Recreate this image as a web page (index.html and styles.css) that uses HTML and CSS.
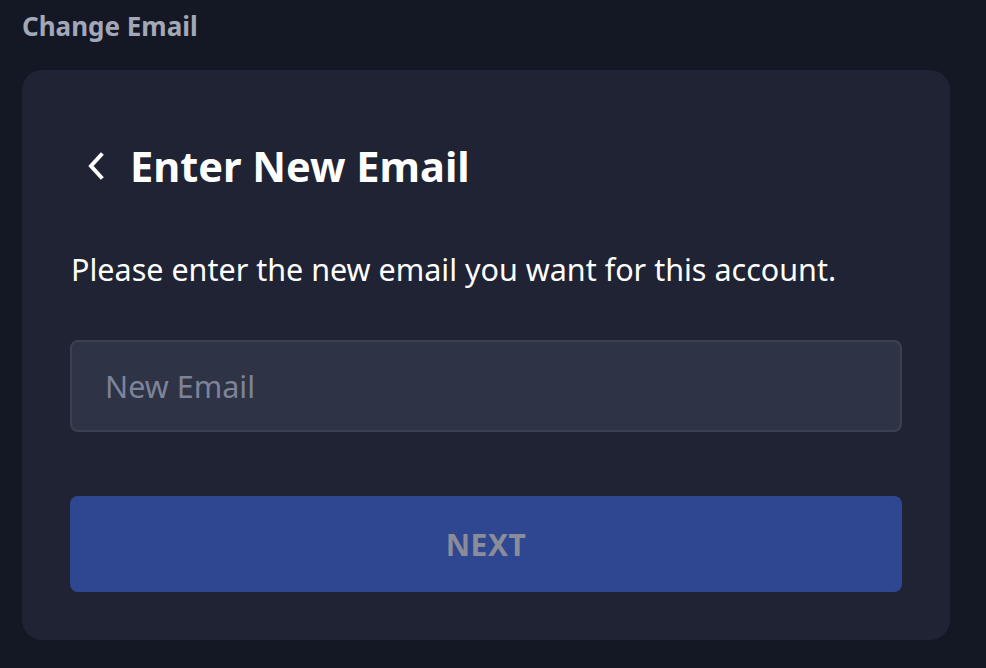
FILE: index.html
```html
<!DOCTYPE html>
<html lang="en">
<head>
    <meta charset="UTF-8">
    <meta name="viewport" content="width=device-width, initial-scale=1.0">
    <title>Change Email</title>
    <link rel="stylesheet" href="styles.css">
</head>
<body>
    <h1 class="page-title">Change Email</h1>

    <div class="card">
        <div class="card-header">
            <button class="back-btn" aria-label="Back">
                <svg width="20" height="30" viewBox="0 0 20 30">
                    <path d="M15 4 L5 15 L15 26" fill="none" stroke="#ffffff" stroke-width="4" stroke-linecap="square" stroke-linejoin="miter"/>
                </svg>
            </button>
            <h2>Enter New Email</h2>
        </div>

        <p class="hint">Please enter the new email you want for this account.</p>

        <input class="email-input" type="email" placeholder="New Email">

        <button class="next-btn" disabled>NEXT</button>
    </div>
</body>
</html>
```

FILE: styles.css
```css
html, body {
    background-color: #141824;
}
body {
    font-family: 'Noto Sans', 'Open Sans', sans-serif;
    margin: 0;
    padding: 0 36px 28px 22px;
}
.page-title {
    color: #a3a8b8;
    font-size: 26px;
    font-weight: 700;
    margin: 0;
    padding-top: 8px;
    height: 62px;
    line-height: 36px;
}
.card {
    background-color: #1f2333;
    border-radius: 20px;
    padding: 66px 48px 48px 48px;
    height: 570px;
    box-sizing: border-box;
}
.card-header {
    display: flex;
    align-items: center;
    gap: 22px;
    margin-left: 16px;
}
.back-btn {
    background: none;
    border: none;
    padding: 0;
    display: flex;
    cursor: pointer;
}
.card-header h2 {
    color: #ffffff;
    font-size: 41.5px;
    font-weight: 700;
    margin: 0 0 0 2px;
    line-height: 60px;
}
.hint {
    color: #ffffff;
    font-size: 30.5px;
    margin: 53px 0 51px 1px;
    line-height: 40px;
}
.email-input {
    display: block;
    width: 100%;
    height: 92px;
    box-sizing: border-box;
    background-color: #2f3346;
    border: 2px solid #3b4053;
    border-radius: 8px;
    padding: 0 33px;
    font-family: inherit;
    font-size: 30.5px;
    color: #ffffff;
    outline: none;
}
.email-input::placeholder {
    color: #7d8399;
}
.next-btn {
    display: block;
    width: 100%;
    height: 96px;
    margin-top: 64px;
    background-color: #2f4791;
    border: none;
    border-radius: 8px;
    color: #8a8d99;
    font-family: inherit;
    font-size: 30px;
    font-weight: 700;
    letter-spacing: 0.5px;
}
```
